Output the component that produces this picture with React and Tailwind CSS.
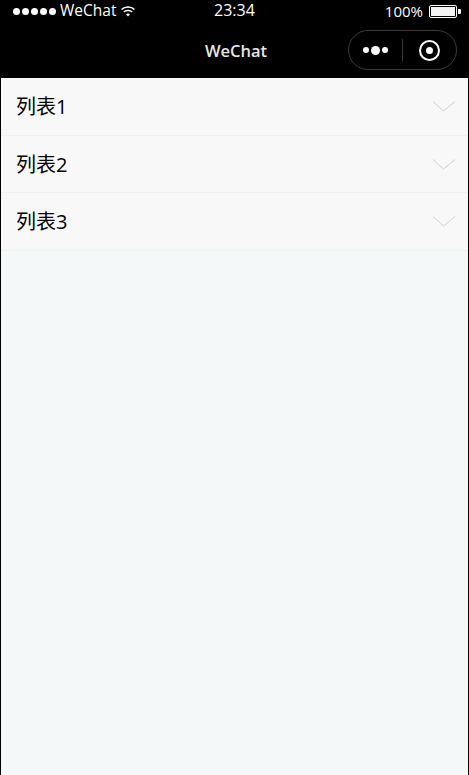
const rows = ["列表1", "列表2", "列表3"];

function Chevron() {
  return (
    <svg width="24" height="14" viewBox="0 0 24 14" fill="none" className="mr-[12px] mt-[2px]">
      <path d="M1 1.5 L11.5 11 L23 1.5" stroke="#d0d0d0" strokeWidth="1" />
    </svg>
  );
}

function StatusBar() {
  return (
    <div className="relative flex h-[22px] items-center justify-between pl-[13px] pr-[8px] text-[15px] text-white">
      <div className="flex items-center">
        <div className="flex gap-[2px]">
          <span className="h-[7px] w-[7px] rounded-full bg-white"></span>
          <span className="h-[7px] w-[7px] rounded-full bg-white"></span>
          <span className="h-[7px] w-[7px] rounded-full bg-white"></span>
          <span className="h-[7px] w-[7px] rounded-full bg-white"></span>
          <span className="h-[7px] w-[7px] rounded-full bg-white"></span>
        </div>
        <span className="ml-[4px] text-[15.5px]">WeChat</span>
        <svg width="16" height="11" viewBox="0 0 15 11" fill="none" stroke="#fff" className="ml-[4px]">
          <path d="M1 3.5 C4.5 0.3 10.5 0.3 14 3.5" strokeWidth="1.5" />
          <path d="M3.3 6 C5.5 4 9.5 4 11.7 6" strokeWidth="1.5" />
          <path d="M7.5 10.5 L5.5 8.2 C6.7 7.4 8.3 7.4 9.5 8.2 Z" fill="#fff" stroke="none" />
        </svg>
      </div>
      <span className="absolute left-[214px] top-0 text-[16px] leading-[21px]">23:34</span>
      <div className="flex items-center">
        <span>100%</span>
        <div className="ml-[6px] flex items-center">
          <div className="h-[13px] w-[28px] rounded-[2px] border border-white p-[1px]">
            <div className="h-full w-full bg-[#f4f4f4]"></div>
          </div>
          <div className="ml-px h-[5px] w-[3px] rounded-r-[1px] bg-white"></div>
        </div>
      </div>
    </div>
  );
}

function Capsule() {
  return (
    <div className="flex h-[40px] w-[109px] items-center rounded-full border border-[#3c3c3c]">
      <div className="flex w-[53px] items-center justify-center gap-[2px]">
        <span className="h-[6px] w-[6px] rounded-full bg-white"></span>
        <span className="h-[9px] w-[9px] rounded-full bg-white"></span>
        <span className="h-[6px] w-[6px] rounded-full bg-white"></span>
      </div>
      <div className="h-[22px] w-px bg-[#3c3c3c]"></div>
      <div className="flex flex-1 items-center justify-center">
        <div className="flex h-[21px] w-[21px] items-center justify-center rounded-full border-2 border-white">
          <span className="h-[7px] w-[7px] rounded-full bg-white"></span>
        </div>
      </div>
    </div>
  );
}

export default function App() {
  return (
    <div className="flex h-[775px] w-[469px] flex-col border-x border-black bg-[#f4f8f8] font-['Open_Sans','Noto_Sans_CJK_SC',sans-serif]">
      <header className="-mx-px h-[78px] shrink-0 bg-black">
        <StatusBar />
        <div className="flex h-[56px] items-center justify-between pr-[12px]">
          <div className="w-[109px]"></div>
          <span className="ml-[15px] pt-[2px] text-[16.5px] font-semibold text-[#e6e6e6]">WeChat</span>
          <Capsule />
        </div>
      </header>
      <ul>
        {rows.map((name) => (
          <li key={name} className="flex h-[57.5px] items-center justify-between border-b border-[#efefef] bg-[#f8f8f8] pl-[15px]">
            <span className="pt-[2px] text-[20px] text-black">{name}</span>
            <Chevron />
          </li>
        ))}
      </ul>
    </div>
  );
}
